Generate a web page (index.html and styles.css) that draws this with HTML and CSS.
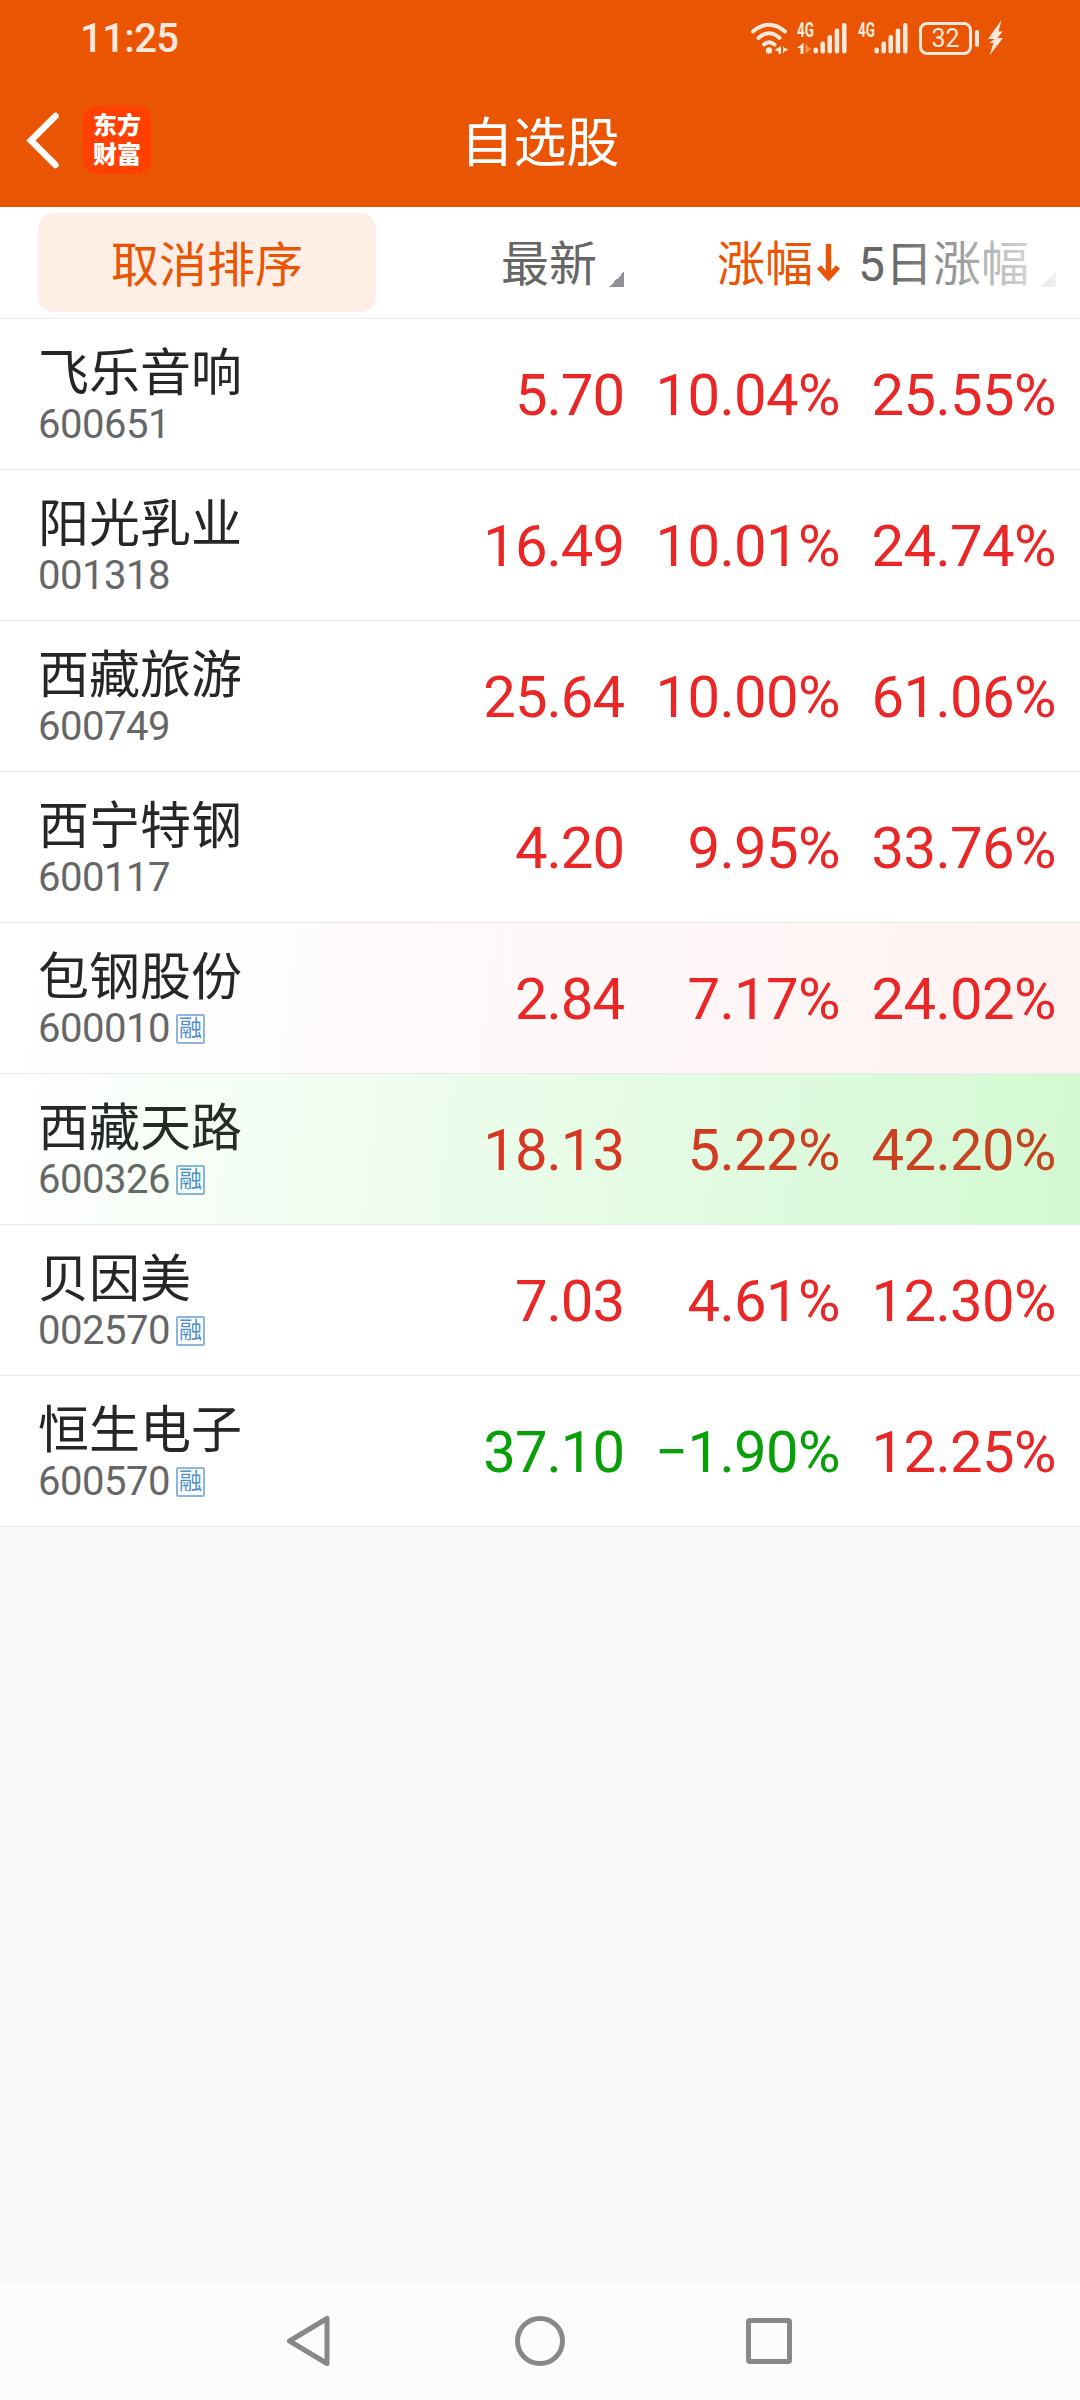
FILE: index.html
```html
<!DOCTYPE html>
<html lang="zh-CN">

<head>
    <meta charset="UTF-8">
    <meta name="viewport" content="width=device-width, initial-scale=1.0">
    <title>自选股</title>
    <link rel="stylesheet" href="styles.css">
</head>

<body>

    <header class="header">
        <div class="status">
            <span class="time">11:25</span>
            <div class="status-icons">
                <svg class="wifi" width="40" height="36" viewBox="0 0 40 36">
                    <g fill="none" stroke="#ffe9dc" stroke-width="4" stroke-linecap="round">
                        <path d="M3 11.5Q19 -2 35 11.5"/>
                        <path d="M8.5 18Q19 8.500 29.500 18"/>
                        <path d="M14 24.500Q19 20 24.500 24.500"/>
                    </g>
                    <circle cx="19" cy="30.500" r="3.200" fill="#ffe9dc"/>
                    <path fill="#ffe9dc" d="M31 26v8h-2.500v-2.500l-4-1.500zM33 26v8l1.500-2.500 4-2-4-1.500z"/>
                </svg>
                <svg class="signal" width="52" height="36" viewBox="0 0 52 36">
                    <text class="net" x="0" y="17" textLength="17" lengthAdjust="spacingAndGlyphs">4G</text>
                    <path fill="#ffe9dc" d="M6.500 23v11h-3v-6h-3.500z"/>
                    <path fill="#ff8d55" d="M8.500 23v11l6-5.500-3-1z"/>
                    <g fill="#ffe9dc">
                        <rect x="16.500" y="27.500" width="4.500" height="6" rx="2"/>
                        <rect x="23.500" y="21.500" width="4.500" height="12" rx="2"/>
                        <rect x="30.500" y="15" width="4.500" height="18.500" rx="2"/>
                        <rect x="37.700" y="8.500" width="4.500" height="25" rx="2"/>
                        <rect x="45" y="3" width="4.500" height="30.500" rx="2"/>
                    </g>
                </svg>
                <svg class="signal second" width="52" height="36" viewBox="0 0 52 36">
                    <text class="net" x="0" y="17" textLength="17" lengthAdjust="spacingAndGlyphs">4G</text>
                    <g fill="#ffe9dc">
                        <rect x="16.500" y="27.500" width="4.500" height="6" rx="2"/>
                        <rect x="23.500" y="21.500" width="4.500" height="12" rx="2"/>
                        <rect x="30.500" y="15" width="4.500" height="18.500" rx="2"/>
                        <rect x="37.700" y="8.500" width="4.500" height="25" rx="2"/>
                        <rect x="45" y="3" width="4.500" height="30.500" rx="2"/>
                    </g>
                </svg>
                <span class="battery">32</span>
                <span class="battery-tip"></span>
                <svg class="bolt" width="16" height="36" viewBox="0 0 16 36">
                    <path fill="#ffe9dc" d="M13.500 0L0 19h6.500l-5 4h4L1.500 35.500 15 18H9.500l5-6.500h-4z"/>
                </svg>
            </div>
        </div>
        <div class="titlebar">
            <div class="left">
                <svg width="36" height="60" viewBox="0 0 36 60">
                    <path d="M31.500 6L7 30.500 31.500 55" fill="none" stroke="#fff" stroke-width="6.500" stroke-linejoin="miter" stroke-linecap="round"/>
                </svg>
                <div class="logo">东方<br>财富</div>
            </div>
            <h1>自选股</h1>
        </div>
    </header>

    <main>
        <div class="row head">
            <div class="cancel">取消排序</div>
            <div class="num"><span>最新</span><i class="corner"></i></div>
            <div class="num active"><span>涨幅</span><svg class="arrow" width="23" height="38" viewBox="0 0 23 38">
                    <path d="M11.500 0v32M2 23l9.500 10.500L21 23" fill="none" stroke="#ea5504" stroke-width="5.500"/>
                </svg></div>
            <div class="num"><span>5日涨幅</span><i class="corner"></i></div>
        </div>

        <div class="row">
            <div class="stock">
                <div class="name">飞乐音响</div>
                <div class="code">600651</div>
            </div>
            <div class="num price">5.70</div>
            <div class="num">10.04%</div>
            <div class="num">25.55%</div>
        </div>
        <div class="row">
            <div class="stock">
                <div class="name">阳光乳业</div>
                <div class="code">001318</div>
            </div>
            <div class="num price">16.49</div>
            <div class="num">10.01%</div>
            <div class="num">24.74%</div>
        </div>
        <div class="row">
            <div class="stock">
                <div class="name">西藏旅游</div>
                <div class="code">600749</div>
            </div>
            <div class="num price">25.64</div>
            <div class="num">10.00%</div>
            <div class="num">61.06%</div>
        </div>
        <div class="row">
            <div class="stock">
                <div class="name">西宁特钢</div>
                <div class="code">600117</div>
            </div>
            <div class="num price">4.20</div>
            <div class="num">9.95%</div>
            <div class="num">33.76%</div>
        </div>
        <div class="row flash-up">
            <div class="stock">
                <div class="name">包钢股份</div>
                <div class="code">600010<span class="tag">融</span></div>
            </div>
            <div class="num price">2.84</div>
            <div class="num">7.17%</div>
            <div class="num">24.02%</div>
        </div>
        <div class="row flash-down">
            <div class="stock">
                <div class="name">西藏天路</div>
                <div class="code">600326<span class="tag">融</span></div>
            </div>
            <div class="num price">18.13</div>
            <div class="num">5.22%</div>
            <div class="num">42.20%</div>
        </div>
        <div class="row">
            <div class="stock">
                <div class="name">贝因美</div>
                <div class="code">002570<span class="tag">融</span></div>
            </div>
            <div class="num price">7.03</div>
            <div class="num">4.61%</div>
            <div class="num">12.30%</div>
        </div>
        <div class="row">
            <div class="stock">
                <div class="name">恒生电子</div>
                <div class="code">600570<span class="tag">融</span></div>
            </div>
            <div class="num price down">37.10</div>
            <div class="num down">−1.90%</div>
            <div class="num">12.25%</div>
        </div>
    </main>

    <nav class="navbar">
        <svg width="50" height="54" viewBox="0 0 50 54">
            <path d="M42 4.500v45L4.500 27z"/>
        </svg>
        <svg width="54" height="54" viewBox="0 0 54 54">
            <circle cx="27" cy="27" r="22.500"/>
        </svg>
        <svg width="50" height="54" viewBox="0 0 50 54">
            <rect x="3.500" y="6.500" width="41" height="41" rx="1.500"/>
        </svg>
    </nav>

</body>

</html>
```

FILE: styles.css
```css
* {
    box-sizing: border-box;
}

body {
    margin: 0;
    height: 2400px;
    display: flex;
    flex-direction: column;
    background-color: #f6f8fa;
    font-family: Roboto, "Noto Sans CJK SC", sans-serif;
}

svg {
    display: block;
    overflow: visible;
}

.header {
    height: 207px;
    background-color: #ea5504;
    color: #fff;
}

.status {
    height: 76px;
    padding: 0 76px 0 80px;
    display: flex;
    align-items: center;
    justify-content: space-between;
    color: #ffe9dc;
}

.time {
    font-size: 40px;
    font-weight: 500;
    letter-spacing: -0.6px;
}

.status-icons {
    display: flex;
    align-items: center;
}

.wifi {
    margin-right: 7px;
}

.second {
    margin: 0 9px;
}

.net {
    font-size: 20px;
    font-weight: 700;
    fill: #ffe9dc;
}

.battery {
    width: 53px;
    height: 33px;
    border: 3px solid #ffe9dc;
    border-radius: 8px;
    font-size: 25px;
    line-height: 28px;
    text-align: center;
}

.battery-tip {
    width: 4px;
    height: 17px;
    margin: 0 9px 0 3px;
    border-radius: 2px;
    background-color: #ffe9dc;
}

.titlebar {
    height: 131px;
    padding: 0 24px 4px;
    display: grid;
    grid-template-columns: 1fr auto 1fr;
    align-items: center;
}

.left {
    display: flex;
    align-items: center;
    gap: 23px;
}

.logo {
    width: 68px;
    height: 68px;
    padding-top: 3px;
    border-radius: 14px;
    background-color: #ff4000;
    font-family: "Noto Sans CJK SC", sans-serif;
    font-size: 24px;
    font-weight: 900;
    line-height: 29px;
    text-align: center;
}

h1 {
    margin: 0;
    padding-top: 9px;
    font-size: 53px;
    font-weight: 400;
    line-height: 60px;
}

.row {
    position: relative;
    height: 151px;
    padding: 0 24px 0 38px;
    display: grid;
    grid-template-columns: 338px 248px 216px 216px;
    align-items: center;
    border-bottom: 1px solid #e9e9e9;
    background-color: #fff;
}

.num {
    padding-top: 1px;
    white-space: nowrap;
    text-align: right;
    font-size: 58px;
    letter-spacing: -0.6px;
    color: #ea2727;
}

.price {
    letter-spacing: -1px;
}

.down {
    color: #08a008;
}

.stock {
    padding-top: 6px;
}

.name {
    font-size: 51px;
    line-height: 56px;
    color: #262626;
}

.code {
    display: flex;
    align-items: center;
    font-size: 40px;
    line-height: 46px;
    letter-spacing: -0.5px;
    color: #666;
}

.tag {
    width: 29px;
    height: 30px;
    margin-left: 6px;
    border: 2px solid #8db6de;
    border-radius: 2px;
    font-size: 23px;
    line-height: 25px;
    text-align: center;
    letter-spacing: 0;
    color: #4a90d2;
}

/* header row */
.head {
    height: 112px;
}

.head .num {
    display: flex;
    justify-content: flex-end;
    align-items: center;
    padding-top: 0;
    font-size: 48px;
    line-height: 60px;
    letter-spacing: 0;
    color: #666;
}

.head .num span {
    padding-top: 4px;
}

.head .active {
    color: #ea5504;
}

.cancel {
    height: 99px;
    padding-top: 3px;
    border-radius: 15px;
    background-color: #fdeee6;
    color: #ea5504;
    font-size: 48px;
    line-height: 99px;
    text-align: center;
}

.corner {
    width: 15px;
    height: 15px;
    margin: 34px 0 0 12px;
    background: linear-gradient(135deg, transparent 50%, #8f8f94 50%);
}

.arrow {
    margin-left: 4px;
}

.head::after {
    content: "";
    position: absolute;
    top: 0;
    right: 0;
    width: 190px;
    height: 100%;
    background: linear-gradient(90deg, rgba(255, 255, 255, 0), #fff);
}

/* price flash */
.flash-up::after,
.flash-down::after {
    content: "";
    position: absolute;
    inset: 0;
}

.flash-up::after {
    background: linear-gradient(97deg, rgba(236, 35, 35, 0), rgba(236, 35, 35, 0.06));
}

.flash-down::after {
    background: linear-gradient(97deg, rgba(0, 220, 0, 0), rgba(0, 220, 0, 0.175));
}

.navbar {
    height: 118px;
    margin-top: auto;
    display: flex;
    justify-content: center;
    align-items: center;
    gap: 178px;
    background-color: #fcfcfc;
}

.navbar svg {
    fill: none;
    stroke: #888;
    stroke-width: 5;
    stroke-linejoin: round;
}
```
